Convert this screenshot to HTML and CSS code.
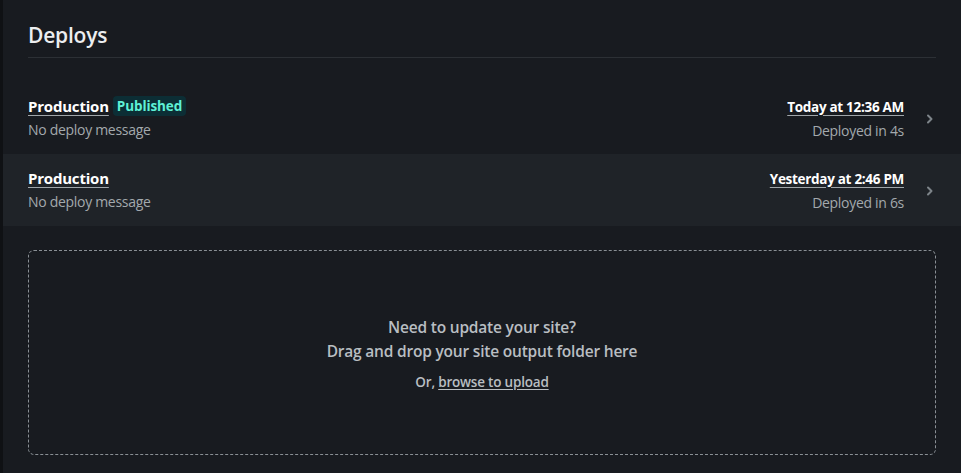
FILE: index.html
```html
<!DOCTYPE html>
<html>
<head>
<meta charset="utf-8">
<link rel="stylesheet" href="styles.css">
</head>
<body>
<div class="page">
  <header class="head">
    <h1 class="title">Deploys</h1>
  </header>
  <ul class="deploys">
    <li class="deploy">
      <div class="info">
        <div class="line"><a class="ctx">Production</a><span class="badge">Published</span></div>
        <div class="msg">No deploy message</div>
      </div>
      <div class="meta">
        <a class="time">Today at 12:36 AM</a>
        <div class="msg">Deployed in 4s</div>
      </div>
      <svg class="chev" viewBox="0 0 8 12" width="8" height="12"><path d="M2 2.5 L5.5 6 L2 9.5" fill="none" stroke="currentColor" stroke-width="2" stroke-linecap="round" stroke-linejoin="round"/></svg>
    </li>
    <li class="deploy alt">
      <div class="info">
        <div class="line"><a class="ctx">Production</a></div>
        <div class="msg">No deploy message</div>
      </div>
      <div class="meta">
        <a class="time">Yesterday at 2:46 PM</a>
        <div class="msg">Deployed in 6s</div>
      </div>
      <svg class="chev" viewBox="0 0 8 12" width="8" height="12"><path d="M2 2.5 L5.5 6 L2 9.5" fill="none" stroke="currentColor" stroke-width="2" stroke-linecap="round" stroke-linejoin="round"/></svg>
    </li>
  </ul>
  <div class="dropwrap">
    <div class="drop">
      <p class="drop-main">Need to update your site?<br>Drag and drop your site output folder here</p>
      <p class="drop-alt">Or, <a class="link">browse to upload</a></p>
    </div>
  </div>
</div>
</body>
</html>
```
FILE: styles.css
```css
html, body {
  margin: 0;
  padding: 0;
  background: #181b20;
}
body {
  font-family: "Open Sans", "Noto Sans", sans-serif;
  color: #e9ebed;
  height: 473px;
  overflow: hidden;
}
.page {
  border-left: 3px solid #0f1114;
  min-height: 473px;
  box-sizing: border-box;
}
.head {
  padding: 21px 25px 0 25px;
}
.title {
  margin: 0;
  font-size: 21px;
  font-weight: 600;
  line-height: 28px;
  padding-bottom: 8px;
  border-bottom: 1px solid #2c3035;
  color: #eceef0;
  letter-spacing: -0.2px;
}
.deploys {
  list-style: none;
  margin: 24px 0 0 0;
  padding: 0;
}
.deploy {
  display: flex;
  align-items: center;
  height: 72px;
  padding: 0 27px 0 25px;
}
.deploy.alt {
  background: #1f2328;
}
.info {
  flex: 1;
}
.line {
  display: flex;
  align-items: center;
  gap: 4px;
  height: 22px;
}
.ctx {
  font-size: 15px;
  font-weight: 700;
  color: #ffffff;
  text-decoration: underline;
  text-decoration-color: #a0a6aa;
  text-underline-offset: 3px;
  letter-spacing: -0.2px;
}
.badge {
  background: #0c2e35;
  color: #5ef1d5;
  font-size: 13.5px;
  font-weight: 700;
  padding: 0 4px;
  line-height: 20px;
  border-radius: 4px;
  letter-spacing: -0.1px;
}
.msg {
  font-size: 14px;
  color: #a3a9ad;
  line-height: 22px;
  margin-top: 2px;
  letter-spacing: -0.3px;
}
.meta {
  text-align: right;
}
.time {
  display: inline-block;
  font-size: 13.5px;
  font-weight: 700;
  color: #ffffff;
  text-decoration: underline;
  text-decoration-color: #a0a6aa;
  text-underline-offset: 3px;
  line-height: 22px;
  letter-spacing: -0.3px;
}
.chev {
  color: #7d8489;
  margin-left: 22px;
  margin-top: 2px;
}
.dropwrap {
  padding: 24px 25px 0 25px;
}
.drop {
  height: 205px;
  box-sizing: border-box;
  border: 1px dashed #8a9095;
  border-radius: 6px;
  display: flex;
  flex-direction: column;
  align-items: center;
  justify-content: center;
  text-align: center;
}
.drop-main {
  margin: 0;
  font-size: 15.5px;
  font-weight: 600;
  line-height: 24px;
  color: #b9bec2;
  letter-spacing: -0.2px;
}
.drop-alt {
  margin: 10px 0 0 0;
  font-size: 13.5px;
  font-weight: 600;
  color: #b9bec2;
  letter-spacing: -0.2px;
}
.link {
  text-decoration: underline;
  text-underline-offset: 2px;
}
```
